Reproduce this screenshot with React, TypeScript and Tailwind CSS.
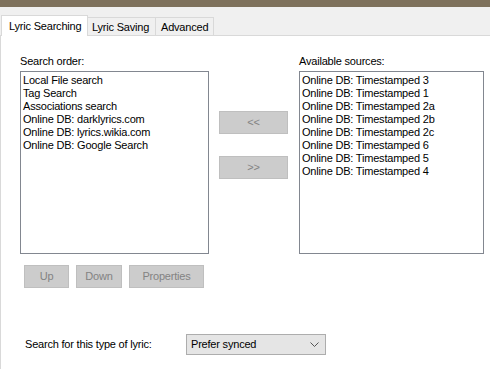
import React from "react";

const leftItems = [
  "Local File search",
  "Tag Search",
  "Associations search",
  "Online DB: darklyrics.com",
  "Online DB: lyrics.wikia.com",
  "Online DB: Google Search",
];

const rightItems = [
  "Online DB: Timestamped 3",
  "Online DB: Timestamped 1",
  "Online DB: Timestamped 2a",
  "Online DB: Timestamped 2b",
  "Online DB: Timestamped 2c",
  "Online DB: Timestamped 6",
  "Online DB: Timestamped 5",
  "Online DB: Timestamped 4",
];

function DisabledButton({ label, w }: { label: string; w: string }) {
  return (
    <div
      className={`${w} h-[23px] flex items-center justify-center bg-[#cccccc] border border-[#bfbfbf] text-[#838383]`}
    >
      {label}
    </div>
  );
}

export default function App() {
  return (
    <div
      className="w-[490px] h-[369px] overflow-hidden bg-[#f0f0f0] text-[11px] leading-[13px] tracking-[-0.2px] text-black flex flex-col"
      style={{ fontFamily: '"Liberation Sans", Arial, sans-serif' }}
    >
      <div className="h-[7px] bg-[#7e715c] shrink-0" />
      {/* Tab strip */}
      <div className="h-[28px] shrink-0 flex items-end pl-[1px] relative">
        <div className="relative z-10 h-[21px] w-[87px] bg-white border border-b-0 border-[#d9d9d9] flex items-start pt-[4px] pl-[7px] -mb-[1px]">
          Lyric Searching
        </div>
        <div className="h-[18px] w-[68px] bg-[#f0f0f0] border border-l-0 border-b-0 border-[#d9d9d9] flex items-start pt-[3px] pl-[4px]">
          Lyric Saving
        </div>
        <div className="h-[18px] w-[58px] bg-[#f0f0f0] border border-l-0 border-b-0 border-[#d9d9d9] flex items-start pt-[3px] pl-[5px]">
          Advanced
        </div>
      </div>
      {/* Panel */}
      <div className="flex-1 bg-white border-t border-l border-[#d9d9d9] flex flex-col pl-[19px] pt-[19px]">
        <div className="flex">
          <div className="flex flex-col w-[189px]">
            <div className="h-[16px]">Search order:</div>
            <div className="h-[183px] border border-[#828790] pl-[2px] pt-[2px]">
              {leftItems.map((t) => (
                <div key={t} className="h-[13px] whitespace-nowrap">
                  {t}
                </div>
              ))}
            </div>
          </div>
          <div className="flex flex-col ml-[10px] pt-[56px] gap-[22px]">
            <DisabledButton label="<<" w="w-[69px]" />
            <DisabledButton label=">>" w="w-[69px]" />
          </div>
          <div className="flex flex-col ml-[11px] w-[185px]">
            <div className="h-[16px]">Available sources:</div>
            <div className="h-[183px] border border-[#828790] pl-[2px] pt-[2px]">
              {rightItems.map((t) => (
                <div key={t} className="h-[13px] whitespace-nowrap">
                  {t}
                </div>
              ))}
            </div>
          </div>
        </div>
        <div className="flex gap-[7px] mt-[11px] ml-[4px]">
          <DisabledButton label="Up" w="w-[45px]" />
          <DisabledButton label="Down" w="w-[46px]" />
          <DisabledButton label="Properties" w="w-[75px]" />
        </div>
        <div className="flex items-center mt-[46px] ml-[5px]">
          <div className="w-[161px]">Search for this type of lyric:</div>
          <div className="w-[140px] h-[21px] bg-[#e5e5e5] border border-[#adadad] flex items-center justify-between pl-[4px] pr-[6px]">
            <span>Prefer synced</span>
            <svg width="9" height="5" viewBox="0 0 9 5">
              <path d="M0.5 0.5 L4.5 4.5 L8.5 0.5" fill="none" stroke="#555" strokeWidth="1" />
            </svg>
          </div>
        </div>
      </div>
    </div>
  );
}
